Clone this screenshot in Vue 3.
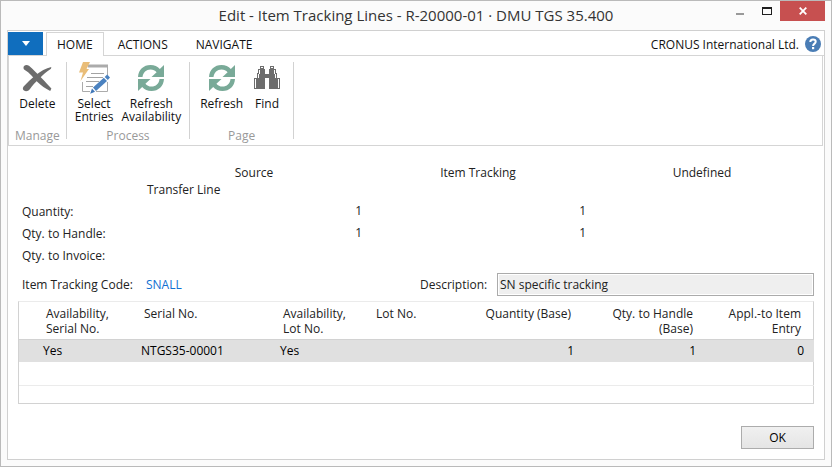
<script setup>
import { ref } from 'vue'

const groups = [
  { name: 'Manage', actions: [{ icon: 'delete', text: 'Delete' }] },
  {
    name: 'Process',
    actions: [
      { icon: 'select', text: 'Select\nEntries' },
      { icon: 'refresh', text: 'Refresh\nAvailability' },
    ],
  },
  {
    name: 'Page',
    actions: [
      { icon: 'refresh', text: 'Refresh' },
      { icon: 'find', text: 'Find' },
    ],
  },
]

const totals = [
  { label: 'Quantity:', source: '1', tracking: '1', undef: '' },
  { label: 'Qty. to Handle:', source: '1', tracking: '1', undef: '' },
  { label: 'Qty. to Invoice:', source: '', tracking: '', undef: '' },
]

const columns = [
  { key: 'availSerial', text: 'Availability,\nSerial No.' },
  { key: 'serial', text: 'Serial No.' },
  { key: 'availLot', text: 'Availability,\nLot No.' },
  { key: 'lot', text: 'Lot No.' },
  { key: 'qty', text: 'Quantity (Base)', num: true },
  { key: 'handle', text: 'Qty. to Handle\n(Base)', num: true },
  { key: 'entry', text: 'Appl.-to Item\nEntry', num: true },
]

const rows = [
  { availSerial: 'Yes', serial: 'NTGS35-00001', availLot: 'Yes', lot: '', qty: '1', handle: '1', entry: '0' },
  {},
  {},
]

const tab = ref('HOME')
const tabs = ['HOME', 'ACTIONS', 'NAVIGATE']
</script>

<template>
  <div class="window">
    <header class="titlebar">
      <h1>Edit - Item Tracking Lines - R-20000-01 · DMU TGS 35.400</h1>
      <div class="controls">
        <button class="ctl min" type="button" aria-label="Minimize">
          <svg width="8" height="2"><rect width="8" height="2" fill="#999" /></svg>
        </button>
        <button class="ctl max" type="button" aria-label="Maximize">
          <svg width="10" height="8"><path d="M0 0H10V8H0ZM1 2V7H9V2Z" fill="#1e1e1e" fill-rule="evenodd" /></svg>
        </button>
        <button class="ctl close" type="button" aria-label="Close">
          <svg width="8" height="8" viewBox="0 0 8 8"><path d="M.7.7 7.3 7.3M7.3.7.7 7.3" stroke="#fff" stroke-width="1.8" /></svg>
        </button>
      </div>
    </header>

    <main class="body">
      <nav class="tabs">
        <button class="app-menu" type="button" aria-label="Application menu">
          <svg width="8" height="5"><path d="M0 0H8L4 5Z" fill="#fff" /></svg>
        </button>
        <button
          v-for="t in tabs"
          :key="t"
          type="button"
          class="tab"
          :class="{ active: t === tab }"
          @click="tab = t"
        >{{ t }}</button>
        <span class="company">CRONUS International Ltd.</span>
        <button class="help" type="button" aria-label="Help">
          <svg width="16" height="16" viewBox="0 0 16 16">
            <circle cx="8" cy="8" r="8" fill="#4a7db5" />
            <path d="M5.3 6.1C5.3 4.3 6.5 3.5 8 3.5S10.7 4.4 10.7 5.8C10.7 7.6 8.1 7.7 8.1 10" fill="none" stroke="#fff" stroke-width="2" />
            <rect x="7" y="11" width="2.2" height="2.2" fill="#fff" />
          </svg>
        </button>
      </nav>

      <section class="ribbon">
        <div v-for="g in groups" :key="g.name" class="group">
          <div class="actions">
            <button v-for="(a, i) in g.actions" :key="i" type="button" class="action">
              <svg v-if="a.icon === 'delete'" width="32" height="32" viewBox="0 0 32 32" fill="#6d6d6d">
                <path d="M2.500 5.500C2.500 2.800 6 2.200 8 3.800C12 7.400 16.500 12 21 16.500C24 19.500 26.800 22.800 30.400 26.500L29.200 29C24.500 26.500 20 23.500 16.500 20C12 15.500 8.500 10.500 3.800 8C2.800 7.400 2.500 6.500 2.500 5.500Z" />
                <path d="M30.300 5L30 6.800C25.500 9.500 22 13 18.500 16.500C14.500 20.200 11.300 23.500 8.800 27.200C7.400 29.300 4.800 29.600 3 28.600C1.600 27.700 1.500 26 2.600 24.500C6.500 20.300 10.500 16.500 14.500 13.200C19.500 9.200 25 6.200 30.300 5Z" />
              </svg>
              <svg v-else-if="a.icon === 'select'" width="32" height="32" viewBox="0 0 32 32">
                <path d="M10 2.500H30V5.500H10Z" fill="#ababab" />
                <path d="M29.500 5V13M4.500 20V29.500H12M18 29.500H29.500V20" fill="none" stroke="#ababab" />
                <path d="M13 11.500H26M9 15.500H25M8 19.500H21M8 24.500H15" stroke="#a3a3a3" />
                <path d="M5 0H12L8.500 7H11L2.500 19L5 10.500H1Z" fill="#e9bd78" />
                <path d="M12.200 31.800L14 26.500L17 29.700Z" fill="#3f76b7" />
                <path d="M15 25.500L25.800 15.800L29 19L18 29Z" fill="#4b82c0" />
                <path d="M26.700 14.900L29.200 12.500L32 15.600L29.800 18Z" fill="#4b82c0" />
              </svg>
              <svg v-else-if="a.icon === 'refresh'" width="32" height="32" viewBox="0 0 32 32" fill="#79aa98">
                <path d="M3 15C3.400 7.800 8.500 3 15.500 3C19.500 3 22.500 4.500 24.800 7L29 3V15H16.500L21.600 10.200C20 8.300 18.200 7.400 15.500 7.400C11.200 7.400 8 10.400 7.500 15Z" />
                <path d="M29 17C28.600 24.200 23.500 29 16.500 29C12.500 29 9.500 27.500 7.200 25L3 29V17H15.500L10.400 21.800C12 23.700 13.800 24.600 16.500 24.600C20.800 24.600 24 21.600 24.500 17Z" />
              </svg>
              <svg v-else width="32" height="32" viewBox="0 0 32 32">
                <path d="M9 4H13V7H14V12H18V7H19V4H23V7H25V11H26V16H29V27H18V16H14V27H3V16H6V11H7V7H9Z" fill="#6d6d6d" />
                <path d="M10 5.500H12M20 5.500H22M8.500 8V12M7.500 12V16M4.500 17V26M23.500 8V12M24.500 12V16M27.500 17V26" fill="none" stroke="#fff" />
              </svg>
              <span class="caption">{{ a.text }}</span>
            </button>
          </div>
          <div class="group-name">{{ g.name }}</div>
        </div>
      </section>

      <section class="content">
        <table class="totals">
          <colgroup><col class="c-label" /><col /><col /><col /></colgroup>
          <thead>
            <tr>
              <td></td>
              <th scope="col">Source</th>
              <th scope="col">Item Tracking</th>
              <th scope="col">Undefined</th>
            </tr>
            <tr>
              <td></td>
              <td class="sub">Transfer Line</td>
              <td></td>
              <td></td>
            </tr>
          </thead>
          <tbody>
            <tr v-for="t in totals" :key="t.label">
              <th scope="row">{{ t.label }}</th>
              <td>{{ t.source }}</td>
              <td>{{ t.tracking }}</td>
              <td>{{ t.undef }}</td>
            </tr>
          </tbody>
        </table>

        <div class="fields">
          <div class="field">
            <span class="code-label">Item Tracking Code:</span>
            <a href="#">SNALL</a>
          </div>
          <div class="field">
            <label for="description">Description:</label>
            <input id="description" type="text" value="SN specific tracking" readonly />
          </div>
        </div>

        <div class="grid">
          <table class="lines">
            <colgroup>
              <col class="c-gutter" />
              <col v-for="c in columns" :key="c.key" :class="'c-' + c.key" />
            </colgroup>
            <thead>
              <tr>
                <td></td>
                <th v-for="c in columns" :key="c.key" scope="col" :class="{ num: c.num }">{{ c.text }}</th>
              </tr>
            </thead>
            <tbody>
              <tr v-for="(r, i) in rows" :key="i" :class="{ selected: i === 0 }">
                <td></td>
                <td v-for="c in columns" :key="c.key" :class="{ num: c.num }">{{ r[c.key] }}</td>
              </tr>
            </tbody>
          </table>
        </div>

        <footer class="footer">
          <button class="ok" type="button">OK</button>
        </footer>
      </section>
    </main>
  </div>
</template>

<style>
body {
  margin: 0;
}
</style>

<style scoped>
.window,
.window * {
  box-sizing: border-box;
}

.window {
  display: flex;
  flex-direction: column;
  min-height: 100vh;
  padding: 0 6px 6px;
  border: 1px solid #bababa;
  background: #fbfbfb;
  color: #222;
  font: 12px/15px "Open Sans", "Noto Sans", sans-serif;
}

button {
  padding: 0;
  border: 0;
  background: none;
  color: inherit;
  font: inherit;
}

svg {
  display: block;
}

.titlebar {
  display: flex;
  justify-content: center;
  position: relative;
  height: 29px;
}

h1 {
  margin: 0;
  color: #333;
  font-size: 15px;
  font-weight: 400;
  line-height: 29px;
}

.controls {
  display: flex;
  position: absolute;
  top: 0;
  right: 0;
}

.ctl {
  display: flex;
  align-items: center;
  justify-content: center;
  width: 27px;
  height: 20px;
}

.min {
  padding-top: 5px;
}

.close {
  width: 45px;
  background: #c75050;
}

.body {
  display: flex;
  flex: 1;
  flex-direction: column;
  border: 1px solid #d0d0d0;
  background: #fff;
}

.tabs {
  display: flex;
  align-items: flex-end;
  height: 25px;
  padding-right: 3px;
  border-bottom: 1px solid #d5d5d5;
  color: #111;
}

.app-menu {
  display: flex;
  align-items: center;
  justify-content: center;
  width: 35px;
  height: 23px;
  margin-right: 3px;
  background: #106ebe;
}

.tab {
  height: 24px;
  margin-bottom: -1px;
  padding: 0 10px;
  border: 1px solid transparent;
  border-bottom: 0;
}

.tab + .tab {
  padding: 0 13px;
}

.active {
  border-color: #d5d5d5;
  background: #fff;
}

.company {
  margin-left: auto;
  line-height: 20px;
}

.help {
  margin: 0 0 3px 6px;
}

.ribbon {
  display: flex;
  height: 90px;
  margin-right: 1px;
  padding: 6px 0;
  border: 1px solid #d5d5d5;
  border-top: 0;
}

.group {
  display: flex;
  flex-direction: column;
  justify-content: space-between;
  padding: 0 8px;
  border-right: 1px solid #d2d2d2;
  color: #111;
}

.group:first-child {
  padding: 0 6px;
}

.group:last-child {
  padding: 0 10px;
}

.actions {
  display: flex;
  justify-content: center;
  gap: 8px;
}

.action {
  display: flex;
  flex-direction: column;
  align-items: center;
  min-width: 32px;
  line-height: 13px;
}

.action svg {
  margin-bottom: 3px;
}

.caption {
  white-space: pre-line;
}

.group-name {
  color: #999;
  line-height: 7px;
  text-align: center;
}

.content {
  display: flex;
  flex: 1;
  flex-direction: column;
  padding: 18px 10px 10px;
}

table {
  width: 100%;
  border-collapse: collapse;
  table-layout: fixed;
}

th,
td {
  padding: 0;
  font-weight: 400;
}

.totals .c-label {
  width: 124px;
}

.totals thead tr {
  height: 17px;
}

.totals tbody tr {
  height: 22px;
}

.totals tbody th {
  padding-left: 4px;
  text-align: left;
}

.totals tbody td {
  padding: 0 4px 2px;
  text-align: right;
}

.totals .sub {
  padding: 0 0 2px 5px;
}

.totals thead tr + tr {
  height: 19px;
}

.fields {
  display: grid;
  grid-template-columns: 1fr 1fr;
  margin: 7px 0 5px;
}

.field {
  display: flex;
  align-items: center;
  padding-left: 4px;
}

.code-label {
  width: 124px;
}

a {
  color: #1170d2;
  text-decoration: none;
}

label {
  width: 77px;
}

input {
  flex: 1;
  min-width: 0;
  height: 23px;
  padding: 0 2px;
  border: 1px solid #ababab;
  border-radius: 0;
  outline: 0;
  background: #efefef;
  box-shadow: inset 0 0 0 1px #fff;
  color: inherit;
  font: inherit;
}

.grid {
  border: 1px solid #d2d2d2;
  border-top-color: #ebebeb;
}

.c-gutter { width: 21px; }
.c-availSerial { width: 98px; }
.c-serial { width: 139px; }
.c-availLot { width: 93px; }
.c-lot { width: 85px; }
.c-qty { width: 122px; }
.c-handle { width: 122px; }
.c-entry { width: 115px; }

.lines th {
  height: 37px;
  padding: 4px 6px 0;
  text-align: left;
  vertical-align: top;
  white-space: pre-line;
}

.lines td {
  padding: 0 3px;
}

.lines thead tr {
  border-bottom: 1px solid #d2d2d2;
}

.lines tbody tr {
  height: 23px;
  color: #000;
}

.lines tbody tr + tr {
  border-bottom: 1px solid #ebebeb;
}

.lines tbody tr:last-child {
  height: 18px;
  border-bottom: 0;
}

.lines .num {
  text-align: right;
}

.lines th.num:last-child {
  padding-right: 13px;
}

.lines td.num:last-child {
  padding-right: 10px;
}

.selected {
  background: #e0e0e0;
}

.footer {
  display: flex;
  justify-content: flex-end;
  margin-top: auto;
}

.ok {
  width: 73px;
  height: 23px;
  border: 1px solid #acacac;
  background: linear-gradient(#f0f0f0, #e5e5e5);
  color: #000;
}
</style>
